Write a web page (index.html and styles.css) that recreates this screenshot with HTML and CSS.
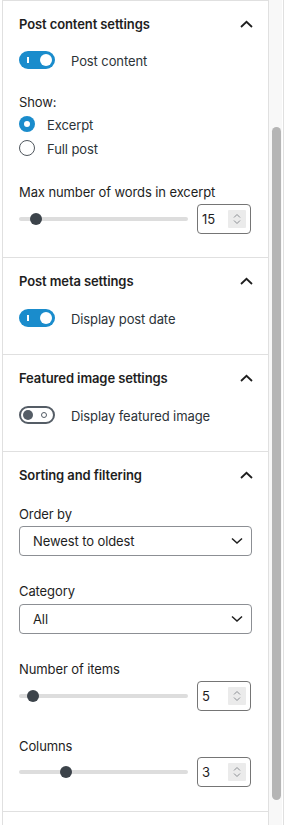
FILE: index.html
```html
<!DOCTYPE html>
<html lang="en">
<head>
    <meta charset="UTF-8">
    <meta name="viewport" content="width=device-width, initial-scale=1.0">
    <title>Block settings</title>
    <link rel="stylesheet" href="styles.css">
</head>
<body>
    <div class="sidebar">
        <div class="panel">

            <!-- Post content -->
            <section class="panel-body">
                <div class="panel-title">
                    <span>Post content settings</span>
                    <svg class="chevron-up" width="13" height="8" viewBox="0 0 13 8"><path d="M1 7 L6.5 1.8 L12 7" fill="none" stroke="#1e1e1e" stroke-width="1.8"/></svg>
                </div>
                <div class="toggle-row first">
                    <span class="toggle on"><span class="toggle-bar"></span><span class="toggle-thumb"></span></span>
                    <span class="toggle-label">Post content</span>
                </div>
                <div class="label show-label">Show:</div>
                <div class="radio-row first">
                    <span class="radio checked"></span>
                    <span class="radio-label">Excerpt</span>
                </div>
                <div class="radio-row">
                    <span class="radio"></span>
                    <span class="radio-label">Full post</span>
                </div>
                <div class="label spaced">Max number of words in excerpt</div>
                <div class="range-row">
                    <div class="range-track"><span class="range-thumb" style="margin-left: 11px;"></span></div>
                    <div class="number-box">
                        <span>15</span>
                        <span class="spinner">
                            <svg width="10" height="14" viewBox="0 0 10 14"><path d="M2 5.5 L5 2.5 L8 5.5 M2 8.5 L5 11.5 L8 8.5" fill="none" stroke="#8c8f94" stroke-width="1"/></svg>
                        </span>
                    </div>
                </div>
            </section>

            <!-- Post meta -->
            <section class="panel-body toggle-only">
                <div class="panel-title">
                    <span>Post meta settings</span>
                    <svg class="chevron-up" width="13" height="8" viewBox="0 0 13 8"><path d="M1 7 L6.5 1.8 L12 7" fill="none" stroke="#1e1e1e" stroke-width="1.8"/></svg>
                </div>
                <div class="toggle-row">
                    <span class="toggle on"><span class="toggle-bar"></span><span class="toggle-thumb"></span></span>
                    <span class="toggle-label">Display post date</span>
                </div>
            </section>

            <!-- Featured image -->
            <section class="panel-body toggle-only">
                <div class="panel-title">
                    <span>Featured image settings</span>
                    <svg class="chevron-up" width="13" height="8" viewBox="0 0 13 8"><path d="M1 7 L6.5 1.8 L12 7" fill="none" stroke="#1e1e1e" stroke-width="1.8"/></svg>
                </div>
                <div class="toggle-row">
                    <span class="toggle off"><span class="toggle-thumb"></span><span class="toggle-ring"></span></span>
                    <span class="toggle-label">Display featured image</span>
                </div>
            </section>

            <!-- Sorting -->
            <section class="panel-body sorting">
                <div class="panel-title">
                    <span>Sorting and filtering</span>
                    <svg class="chevron-up" width="13" height="8" viewBox="0 0 13 8"><path d="M1 7 L6.5 1.8 L12 7" fill="none" stroke="#1e1e1e" stroke-width="1.8"/></svg>
                </div>
                <div class="label first-label">Order by</div>
                <div class="select">
                    <span>Newest to oldest</span>
                    <svg width="12" height="8" viewBox="0 0 12 8"><path d="M1 1.5 L6 6 L11 1.5" fill="none" stroke="#1e1e1e" stroke-width="1.5"/></svg>
                </div>
                <div class="label spaced">Category</div>
                <div class="select">
                    <span>All</span>
                    <svg width="12" height="8" viewBox="0 0 12 8"><path d="M1 1.5 L6 6 L11 1.5" fill="none" stroke="#1e1e1e" stroke-width="1.5"/></svg>
                </div>
                <div class="label spaced">Number of items</div>
                <div class="range-row">
                    <div class="range-track"><span class="range-thumb" style="margin-left: 8px;"></span></div>
                    <div class="number-box">
                        <span>5</span>
                        <span class="spinner">
                            <svg width="10" height="14" viewBox="0 0 10 14"><path d="M2 5.5 L5 2.5 L8 5.5 M2 8.5 L5 11.5 L8 8.5" fill="none" stroke="#8c8f94" stroke-width="1"/></svg>
                        </span>
                    </div>
                </div>
                <div class="label spaced">Columns</div>
                <div class="range-row">
                    <div class="range-track"><span class="range-thumb" style="margin-left: 41px;"></span></div>
                    <div class="number-box">
                        <span>3</span>
                        <span class="spinner">
                            <svg width="10" height="14" viewBox="0 0 10 14"><path d="M2 5.5 L5 2.5 L8 5.5 M2 8.5 L5 11.5 L8 8.5" fill="none" stroke="#8c8f94" stroke-width="1"/></svg>
                        </span>
                    </div>
                </div>
            </section>

            <section class="panel-body"></section>
        </div>

        <div class="scrollbar">
            <div class="scrollbar-thumb"></div>
        </div>
    </div>
</body>
</html>
```
FILE: styles.css
```css
body {
    margin: 0;
    background: #fff;
    font-family: Inter, "Noto Sans", sans-serif;
    font-size: 13px;
    letter-spacing: -0.1px;
    color: #1e1e1e;
}

.sidebar {
    display: flex;
    width: 282px;
    height: 825px;
    margin-left: 2px;
    overflow: hidden;
    box-sizing: border-box;
    border-left: 1px solid #e0e0e0;
    border-right: 1px solid #e0e0e0;
}

.panel {
    flex: none;
    width: 265px;
    overflow: hidden;
}

/* Panel sections */
.panel-body {
    border-top: 1px solid #e0e0e0;
    padding: 0 16px 23px;
}
.panel-body.toggle-only {
    padding-bottom: 27px;
}
.panel-body.sorting {
    padding-bottom: 24px;
}

.panel-title {
    display: flex;
    justify-content: space-between;
    align-items: center;
    height: 44px;
    padding: 1px 0;
    font-weight: 600;
    line-height: 16px;
}
.chevron-up {
    margin-right: -1px;
}

/* labels sit one pixel lower in their box */
.label {
    line-height: 16px;
    padding-top: 1px;
    color: #1e1e1e;
}
.show-label {
    margin-top: 24px;
}
.label.spaced {
    margin-top: 27px;
}
.sorting .label.spaced {
    margin-top: 26px;
}
.first-label {
    margin-top: 7px;
}

/* Toggle */
.toggle-row {
    display: flex;
    align-items: center;
    margin-top: 5px;
    height: 18px;
}
.toggle-row.first {
    margin-top: 4px;
}
.toggle {
    flex: none;
    display: flex;
    align-items: center;
    justify-content: space-between;
    box-sizing: border-box;
    width: 36px;
    height: 18px;
    border-radius: 9px;
    margin-right: 16px;
}
.toggle.on {
    background: #1a8ccc;
    padding: 0 3px 0 8px;
}
.toggle.on .toggle-bar {
    width: 2px;
    height: 6px;
    background: #fff;
}
.toggle.on .toggle-thumb {
    width: 12px;
    height: 12px;
    border-radius: 50%;
    background: #fff;
}
.toggle.off {
    border: 2px solid #555d66;
    padding: 0 6px 0 2px;
}
.toggle.off .toggle-thumb {
    width: 10px;
    height: 10px;
    border-radius: 50%;
    background: #555d66;
}
.toggle-ring {
    box-sizing: border-box;
    width: 6px;
    height: 6px;
    border-radius: 50%;
    border: 1.5px solid #555d66;
}
.toggle-label {
    line-height: 16px;
    padding-top: 1px;
    color: #2c3338;
}

/* Radio */
.radio-row {
    display: flex;
    align-items: center;
    height: 16px;
    margin-top: 8px;
}
.radio-row.first {
    margin-top: 6px;
}
.radio {
    flex: none;
    box-sizing: border-box;
    width: 16px;
    height: 16px;
    border-radius: 50%;
    border: 1.5px solid #50575e;
    margin-right: 12px;
    display: flex;
    align-items: center;
    justify-content: center;
}
.radio.checked {
    border: none;
    background: #1a8ccc;
}
.radio.checked::after {
    content: "";
    width: 6px;
    height: 6px;
    border-radius: 50%;
    background: #fff;
}
.radio-label {
    line-height: 16px;
    padding-top: 1px;
    color: #2c3338;
}

/* Range */
.range-row {
    display: flex;
    align-items: center;
    margin-top: 4px;
    padding-right: 1px;
}
.sorting .range-row:last-child {
    margin-top: 3px;
}
.range-track {
    flex: 1;
    display: flex;
    align-items: center;
    height: 4px;
    border-radius: 2px;
    background: #dddddd;
}
.range-thumb {
    flex: none;
    width: 12px;
    height: 12px;
    border-radius: 50%;
    background: #3c434a;
}
.number-box {
    flex: none;
    display: flex;
    align-items: center;
    justify-content: space-between;
    box-sizing: border-box;
    width: 54px;
    height: 30px;
    margin-left: 9px;
    padding: 0 4px 0 4px;
    border: 1px solid #757575;
    border-radius: 4px;
    color: #1e1e1e;
    font-size: 13px;
}
.spinner {
    display: flex;
    align-items: center;
    justify-content: center;
    width: 18px;
    height: 18px;
    background: #ebebeb;
    border-radius: 1px;
}

/* Select */
.select {
    display: flex;
    align-items: center;
    justify-content: space-between;
    box-sizing: border-box;
    height: 30px;
    margin-top: 4px;
    padding: 0 8px 0 13px;
    border: 1px solid #8c8f94;
    border-radius: 4px;
    font-size: 13px;
    color: #1e1e1e;
}
.sorting .label.spaced + .select {
    margin-top: 5px;
}

/* Scrollbar */
.scrollbar {
    flex: none;
    width: 14px;
    box-sizing: border-box;
    border-left: 1px solid #e0e0e0;
    background: #f8f8f8;
    padding-top: 127px;
}
.scrollbar-thumb {
    width: 9px;
    height: 673px;
    margin-left: 3px;
    border-radius: 5px;
    background: #b5b5b5;
}
```
